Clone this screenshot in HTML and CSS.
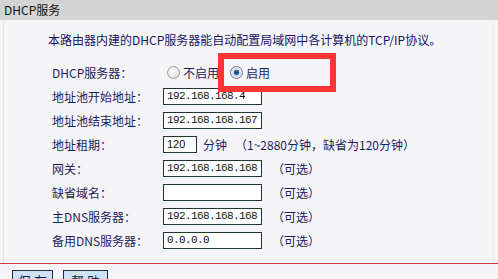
FILE: index.html
```html
<!DOCTYPE html>
<html lang="zh-CN">
<head>
    <meta charset="UTF-8">
    <title>DHCP服务</title>
    <link rel="stylesheet" href="styles.css">
</head>
<body>

<div class="title-bar">DHCP服务</div>

<div class="content">
    <p class="desc">本路由器内建的DHCP服务器能自动配置局域网中各计算机的TCP/IP协议。</p>

    <div class="form">
        <span class="label">DHCP服务器：</span>
        <span class="field radios">
            <span class="radio"></span><span class="radio-text">不启用</span>
            <span class="radio checked"></span><span class="radio-text">启用</span>
            <span class="highlight"></span>
        </span>

        <span class="label">地址池开始地址：</span>
        <span class="field"><input class="ip" type="text" value="192.168.168.4"></span>

        <span class="label">地址池结束地址：</span>
        <span class="field"><input class="ip" type="text" value="192.168.168.167"></span>

        <span class="label">地址租期：</span>
        <span class="field"><input class="ip short" type="text" value="120"><span class="unit">分钟</span><span class="hint">（1~2880分钟，缺省为120分钟）</span></span>

        <span class="label">网关：</span>
        <span class="field"><input class="ip" type="text" value="192.168.168.168"><span class="hint">（可选）</span></span>

        <span class="label">缺省域名：</span>
        <span class="field"><input class="ip" type="text" value=""><span class="hint">（可选）</span></span>

        <span class="label">主DNS服务器：</span>
        <span class="field"><input class="ip" type="text" value="192.168.168.168"><span class="hint">（可选）</span></span>

        <span class="label">备用DNS服务器：</span>
        <span class="field"><input class="ip" type="text" value="0.0.0.0"><span class="hint">（可选）</span></span>
    </div>
</div>

<div class="rule"></div>

<div class="buttons">
    <button class="btn">保 存</button>
    <button class="btn wide">帮 助</button>
</div>

</body>
</html>
```

FILE: styles.css
```css
body {
    margin: 0;
    background-color: #f5f5f7;
    font-family: "Noto Sans CJK SC", sans-serif;
    font-size: 12px;
    color: #1c1c5c;
    overflow: hidden;
}

.title-bar {
    height: 20px;
    line-height: 20px;
    padding-left: 4px;
    background-color: #d4d4d4;
    color: #111;
}

.content {
    margin: 0 4px 0 3px;
    border-left: 1px solid #f6dcdc;
    border-right: 1px solid #f3ecd8;
    padding-top: 10px;
}

.desc {
    margin: 0;
    padding-left: 44px;
    height: 20px;
    line-height: 20px;
    color: #141466;
}

.form {
    display: grid;
    grid-template-columns: 111px 1fr;
    grid-auto-rows: 24px;
    margin-top: 10px;
    padding-left: 48px;
    padding-bottom: 11px;
}

.label {
    display: flex;
    align-items: center;
    white-space: nowrap;
}

.field {
    display: flex;
    align-items: center;
    white-space: nowrap;
}

.radios {
    position: relative;
}

.radio {
    width: 11px;
    height: 11px;
    border-radius: 50%;
    border: 1px solid #9a9a9a;
    background: radial-gradient(circle at 40% 35%, #ffffff 0%, #e6e6e6 60%, #c8c8c8 100%);
    margin-left: 4px;
    flex-shrink: 0;
}

.radio.checked {
    margin-left: 11px;
    border-color: #6b7f94;
    background: radial-gradient(circle, #0e3c66 0%, #2c73b0 32%, #d4dde6 40%, #f4f4f4 100%);
}

.radio-text {
    margin-left: 3px;
}

.highlight {
    position: absolute;
    left: 55px;
    top: -7px;
    width: 106px;
    height: 27px;
    border: 6px solid #ff3535;
}

.ip {
    box-sizing: border-box;
    width: 99px;
    height: 17px;
    margin: 0;
    padding: 0 0 0 3px;
    border: 1px solid #1f3636;
    background-color: #fff;
    font-family: "Liberation Mono", monospace;
    font-size: 11px;
    letter-spacing: -0.6px;
    color: #111;
}

.ip.short {
    width: 34px;
    font-family: "Liberation Sans", sans-serif;
    letter-spacing: 0;
}

.unit {
    margin-left: 6px;
}

.hint {
    margin-left: 10px;
}

.unit + .hint {
    margin-left: 8px;
}

.rule {
    height: 1px;
    background-color: #cc3a44;
}

.buttons {
    display: flex;
    gap: 10px;
    padding: 6px 0 0 12px;
}

.btn {
    width: 41px;
    height: 22px;
    padding: 0;
    border: 1px solid #1a2c4c;
    background-color: #cfe2f4;
    font-family: "Noto Sans CJK SC", sans-serif;
    font-size: 13px;
    line-height: 18px;
    color: #141450;
}

.btn.wide {
    width: 45px;
}
```
